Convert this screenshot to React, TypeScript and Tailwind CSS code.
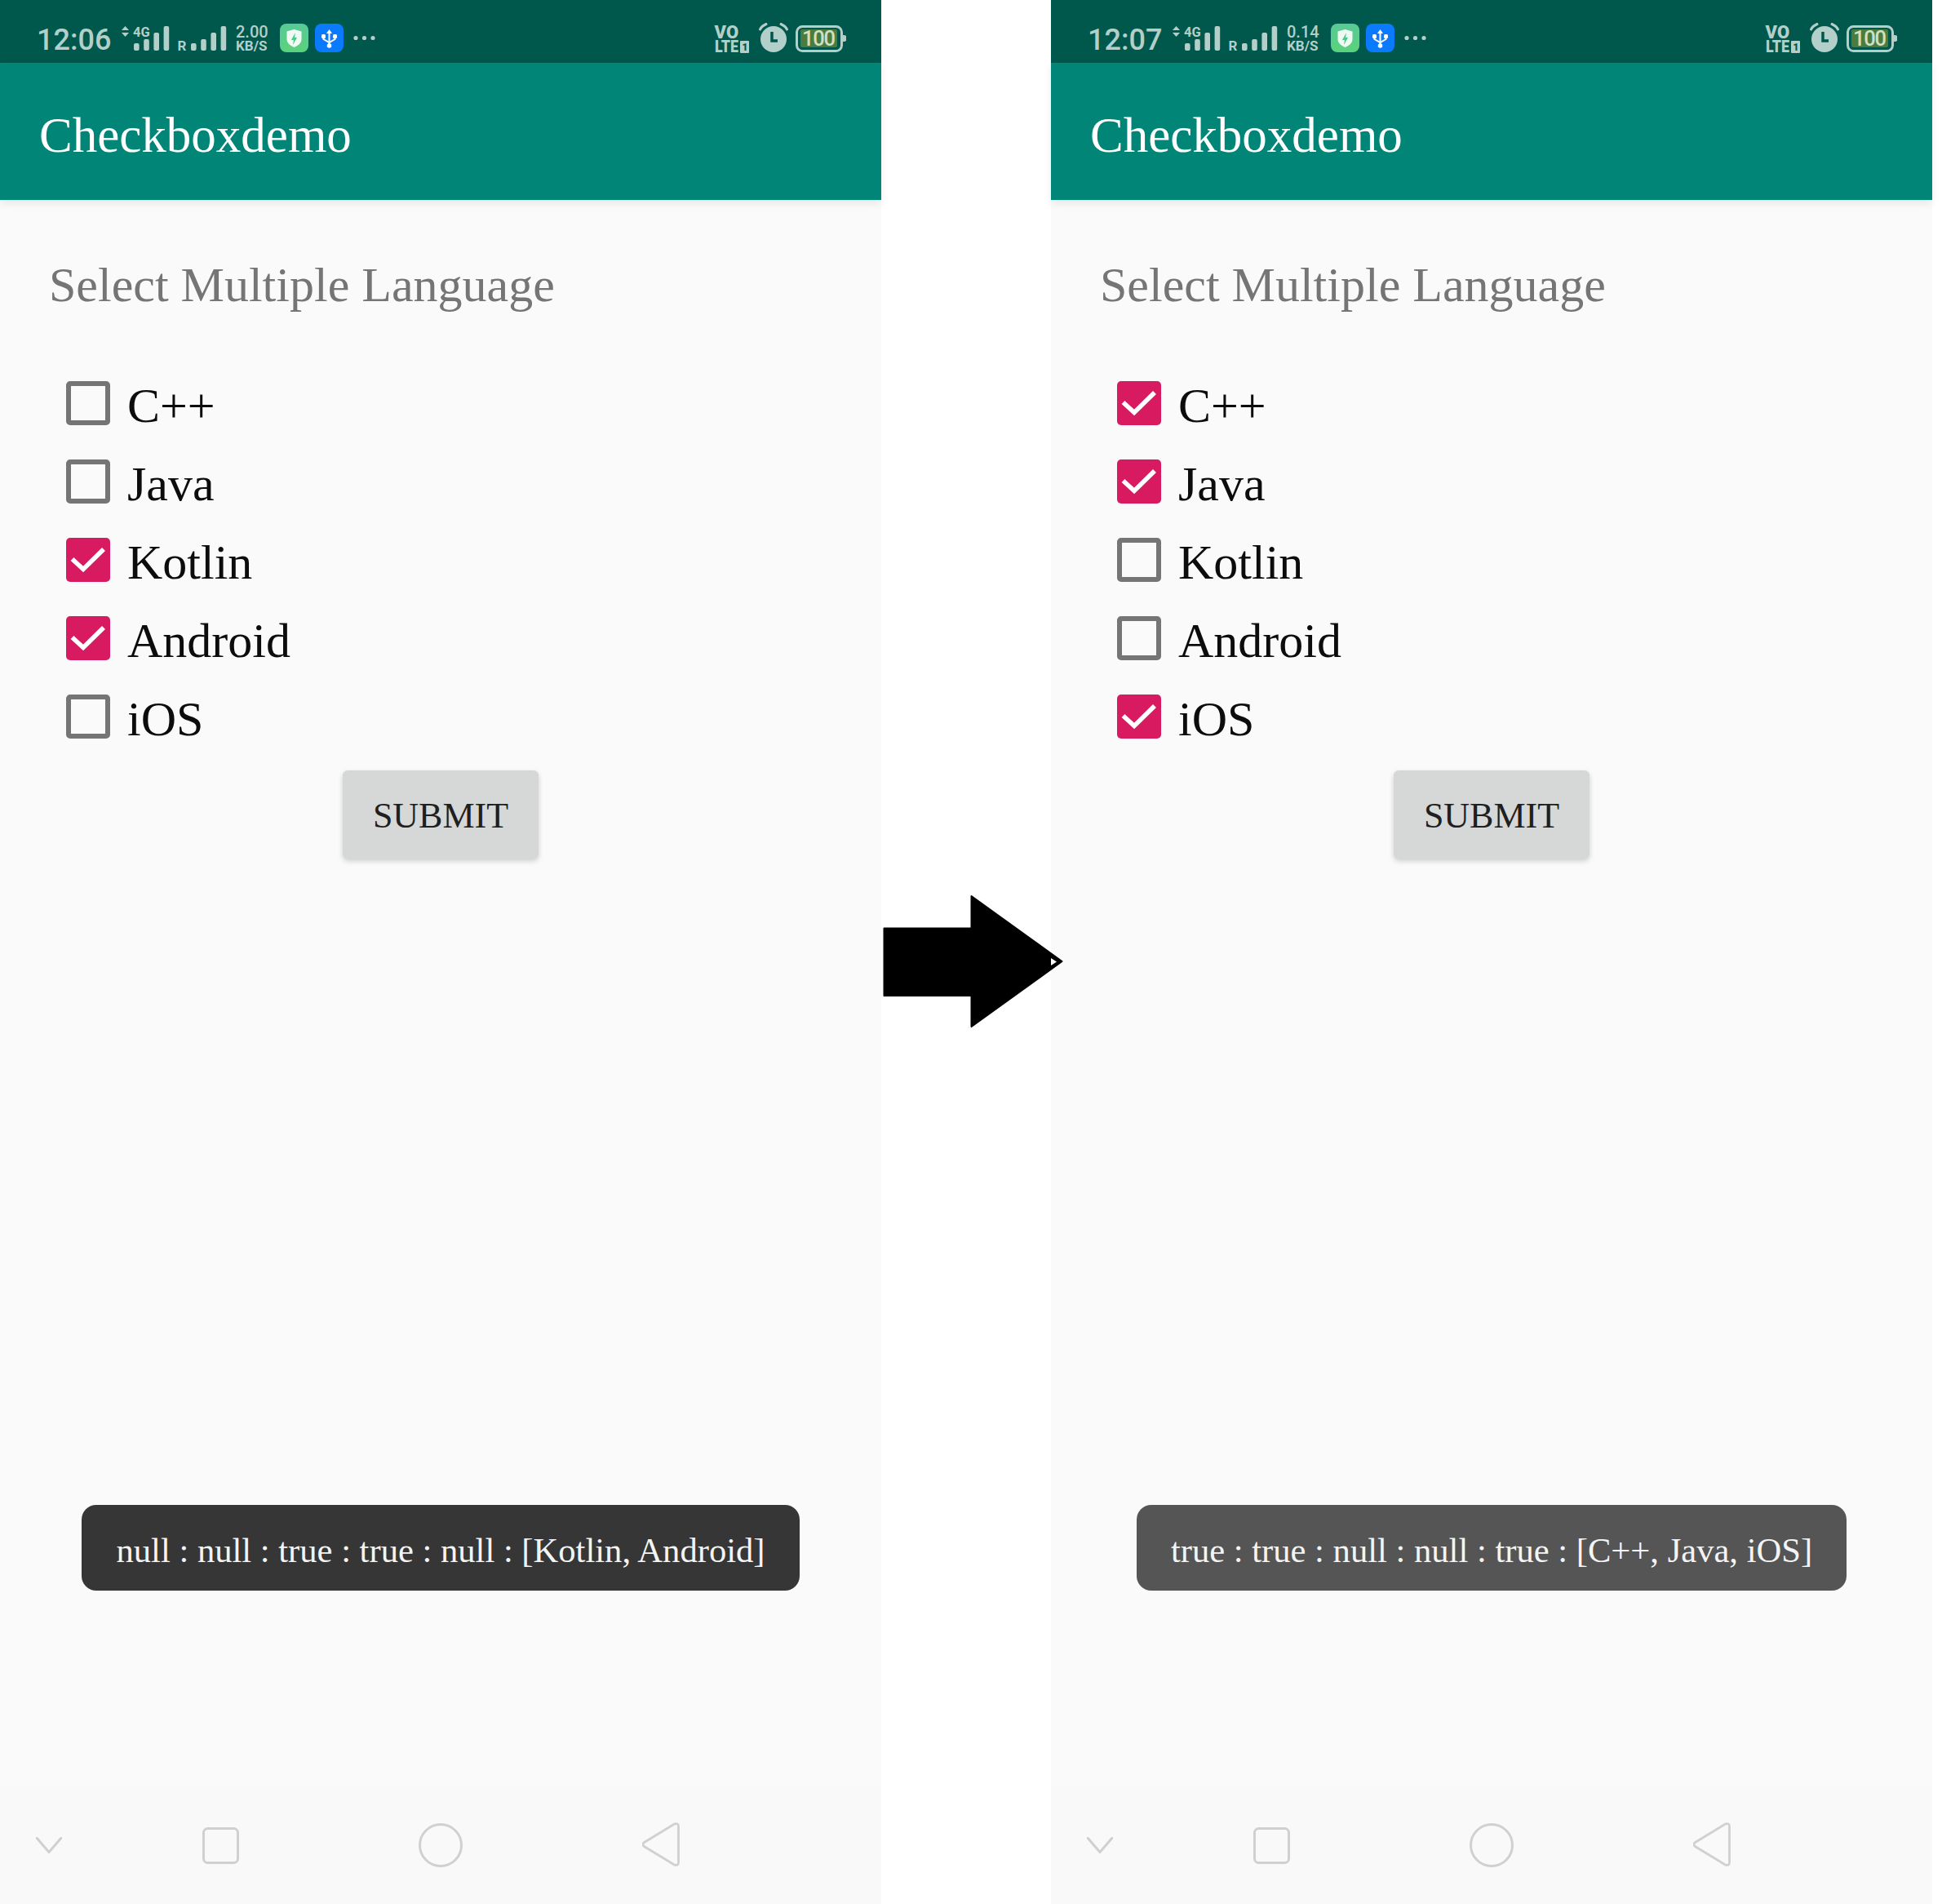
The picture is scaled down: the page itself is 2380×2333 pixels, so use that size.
import React from "react";

const ink = "#b3cfca";

function Bars({ x }: { x: number }) {
  const w = 6.6;
  return (
    <>
      <rect x={x} y={53} width={w} height={9} rx={2} fill={ink} />
      <rect x={x + 12.2} y={48} width={w} height={14} rx={2} fill={ink} />
      <rect x={x + 24.4} y={40} width={w} height={22} rx={2} fill={ink} />
      <rect x={x + 36.6} y={32} width={w} height={30} rx={2} fill={ink} />
    </>
  );
}

function Signal() {
  return (
    <svg width="131" height="77" viewBox="149 0 131 77" className="shrink-0">
      <polygon points="149,37 158,37 153.5,32" fill={ink} />
      <polygon points="149,40 158,40 153.5,45" fill={ink} />
      <text x="163" y="45" fontFamily="Roboto, sans-serif" fontWeight="700" fontSize="16.5" fill={ink}>4G</text>
      <Bars x={164} />
      <text x="217.5" y="62" fontFamily="Roboto, sans-serif" fontWeight="700" fontSize="17" fill={ink}>R</text>
      <Bars x={234} />
    </svg>
  );
}

function ShieldApp() {
  return (
    <div className="w-[35px] h-[35px] mt-[29px] rounded-[8px] bg-linear-to-b from-[#58c995] to-[#5bd27c] flex items-center justify-center shrink-0">
      <svg width="35" height="35" viewBox="0 0 35 35">
        <path d="M17.5 7 L26.5 9.5 V19 C26.5 24 22 27 17.5 29 C13 27 8.5 24 8.5 19 V9.5 Z" fill="#ffffff" fillOpacity="0.9" />
        <path d="M19 11 L14 20 H17 L16 26 L21 17 H18 Z" fill="#45c987" />
      </svg>
    </div>
  );
}

function UsbApp() {
  return (
    <div className="w-[35px] h-[35px] mt-[29px] ml-[8px] rounded-[8px] bg-[#0a7aff] flex items-center justify-center shrink-0">
      <svg width="35" height="35" viewBox="0 0 35 35">
        <polygon points="17.5,7 21,12 14,12" fill="#fff" />
        <path d="M17.5 11 V27" stroke="#fff" strokeWidth="2" />
        <path d="M10.5 16 V19 L17.5 23 L24.5 19 V16" stroke="#fff" strokeWidth="2" fill="none" />
        <rect x="8" y="13" width="5" height="5" rx="1.5" fill="#fff" />
        <rect x="22" y="13" width="5" height="5" rx="1.5" fill="#fff" />
        <circle cx="17.5" cy="27" r="2.8" fill="#fff" />
      </svg>
    </div>
  );
}

function Dots() {
  return (
    <svg width="27" height="77" viewBox="433 0 27 77" className="shrink-0 ml-[12px]">
      <circle cx="436" cy="46.5" r="2.6" fill={ink} />
      <circle cx="446.5" cy="46.5" r="2.6" fill={ink} />
      <circle cx="457" cy="46.5" r="2.6" fill={ink} />
    </svg>
  );
}

function RightIcons() {
  return (
    <svg width="162" height="77" viewBox="875 0 162 77" className="shrink-0 ml-auto mr-[43px]">
      <text x="875.5" y="47" fontFamily="Roboto, sans-serif" fontWeight="900" fontSize="22" fill={ink}>VO</text>
      <text x="876" y="64" fontFamily="Roboto, sans-serif" fontWeight="900" fontSize="19.5" fill={ink} textLength="29" lengthAdjust="spacingAndGlyphs">LTE</text>
      <rect x="907" y="50" width="11" height="15" rx="1" fill={ink} />
      <text x="909.5" y="62" fontFamily="Roboto, sans-serif" fontWeight="900" fontSize="12" fill="#00574b">1</text>
      <circle cx="948" cy="48" r="16" fill={ink} />
      <path d="M931.5 36 C933 33 935.5 31 939 29.5" stroke={ink} strokeWidth="3" strokeLinecap="round" fill="none" />
      <path d="M964.5 36 C963 33 960.5 31 957 29.5" stroke={ink} strokeWidth="3" strokeLinecap="round" fill="none" />
      <path d="M946 39 V50 H953" stroke="#00574b" strokeWidth="3.5" fill="none" />
      <rect x="976.5" y="32.5" width="55" height="30" rx="7" fill="none" stroke={ink} strokeWidth="3" />
      <path d="M1033 43 h1 a3 3 0 0 1 0 8 h-1 Z" fill={ink} />
      <rect x="981" y="36" width="45" height="22" rx="2" fill="#4a7c42" />
      <text x="983" y="56" fontFamily="Roboto, sans-serif" fontWeight="500" fontSize="25.5" fill="#cfe0c4" textLength="41">100</text>
    </svg>
  );
}

function StatusBar({ time, speed }: { time: string; speed: string }) {
  return (
    <div className="h-[77px] bg-[#00574b] shrink-0">
      <div className="flex w-[1080px] h-[77px] font-['Roboto',sans-serif] text-[#b3cfca]">
        <div className="ml-[45px] w-[104px] mt-[28px] text-[36px] leading-[42px] font-medium shrink-0">{time}</div>
        <Signal />
        <div className="ml-[9px] w-[54px] mt-[31px] flex flex-col shrink-0">
          <span className="text-[20px] leading-[17px] font-medium">{speed}</span>
          <span className="text-[17px] leading-[16px] font-bold">KB/S</span>
        </div>
        <ShieldApp />
        <UsbApp />
        <Dots />
        <RightIcons />
      </div>
    </div>
  );
}

function Check({ on }: { on: boolean }) {
  if (!on) {
    return <div className="w-[54px] h-[54px] mt-[18px] rounded-[5px] border-[6px] border-[#757575] shrink-0" />;
  }
  return (
    <div className="w-[54px] h-[54px] mt-[18px] rounded-[5px] bg-[#d81b60] shrink-0">
      <svg width="54" height="54" viewBox="0 0 54 54">
        <path d="M7.5 26 L21 38.5 L46 14" stroke="#ffffff" strokeWidth="5.6" fill="none" />
      </svg>
    </div>
  );
}

function Row({ label, on }: { label: string; on: boolean }) {
  return (
    <div className="flex h-[96px] pl-[81px] gap-[21px] text-[60px] leading-[96px] text-[#0c0c0c]">
      <Check on={on} />
      <span>{label}</span>
    </div>
  );
}

function NavBar() {
  const stroke = "#d0d0d0";
  return (
    <div className="flex items-center h-[144px] shrink-0 bg-[#f9f9f9]">
      <svg width="32" height="20" viewBox="0 0 32 20" className="ml-[44px] shrink-0">
        <path d="M1 1 L16 18.5 L31 1" stroke={stroke} strokeWidth="3" fill="none" strokeLinecap="round" />
      </svg>
      <svg width="45" height="45" viewBox="0 0 45 45" className="ml-[172px] shrink-0">
        <rect x="1.5" y="1.5" width="42" height="42" rx="5" stroke={stroke} strokeWidth="3" fill="none" />
      </svg>
      <svg width="54" height="54" viewBox="0 0 54 54" className="ml-[220px] shrink-0">
        <circle cx="27" cy="27" r="25.5" stroke={stroke} strokeWidth="3" fill="none" />
      </svg>
      <svg width="46" height="54" viewBox="0 0 46 54" className="ml-[220px] shrink-0 -mt-[2px]">
        <path d="M2.5 24.5 L39 2.2 Q44.5 0.5 44.5 5 V49 Q44.5 53.5 39 51.8 L2.5 29.5 Q-0.5 27 2.5 24.5 Z" stroke={stroke} strokeWidth="2.8" fill="none" />
      </svg>
    </div>
  );
}

function Phone({ time, speed, checks, toast, toastBg }: { time: string; speed: string; checks: boolean[]; toast: string; toastBg: string }) {
  const labels = ["C++", "Java", "Kotlin", "Android", "iOS"];
  return (
    <div className="w-[1080px] h-[2333px] flex flex-col bg-[#fafafa] shrink-0">
      <StatusBar time={time} speed={speed} />
      <div className="h-[168px] bg-[#008577] shrink-0 relative z-10 shadow-[0_4px_10px_rgba(0,0,0,0.08)] pl-[48px] pt-[6px] text-[61px] leading-[165px] text-white">
        Checkboxdemo
      </div>
      <div className="flex-1 min-h-0 flex flex-col">
        <div className="pl-[60px] mt-[71px] text-[60px] leading-[66px] text-[#757575]">Select Multiple Language</div>
        <div className="mt-[67px] flex flex-col">
          {labels.map((l, i) => (
            <Row key={l} label={l} on={checks[i]} />
          ))}
        </div>
        <button className="self-center mt-[15px] w-[240px] h-[108px] pt-[3px] rounded-[6px] bg-[#d6d7d7] shadow-[0_3px_6px_rgba(0,0,0,0.18)] text-[44px] text-[#1f1f1f]">
          SUBMIT
        </button>
        <div style={{ backgroundColor: toastBg }} className="self-center mt-[792px] h-[105px] px-[42px] pt-[6px] rounded-[18px] text-[42.6px] leading-[99px] text-[#f4f4f4] whitespace-nowrap">
          {toast}
        </div>
      </div>
      <NavBar />
    </div>
  );
}

export default function App() {
  return (
    <div className="relative flex w-[2380px] h-[2333px] bg-white overflow-hidden font-['Liberation_Serif',serif]">
      <Phone
        time="12:06"
        speed="2.00"
        checks={[false, false, true, true, false]}
        toast="null : null : true : true : null : [Kotlin, Android]"
        toastBg="#363636"
      />
      <div className="w-[208px] shrink-0" />
      <Phone
        time="12:07"
        speed="0.14"
        checks={[true, true, false, false, true]}
        toast="true : true : null : null : true : [C++, Java, iOS]"
        toastBg="#555555"
      />
      <svg width="222" height="164" viewBox="0 0 222 164" className="absolute left-[1082px] top-[1096px]">
        <path d="M1.5 41.5 H108.5 V2 L219.5 82 L108.5 162 V124 H1.5 Z" fill="#000" stroke="#000" strokeWidth="2" strokeLinejoin="round" />
        <polygon points="206,78 213,82.5 206,87" fill="#fff" />
      </svg>
    </div>
  );
}
